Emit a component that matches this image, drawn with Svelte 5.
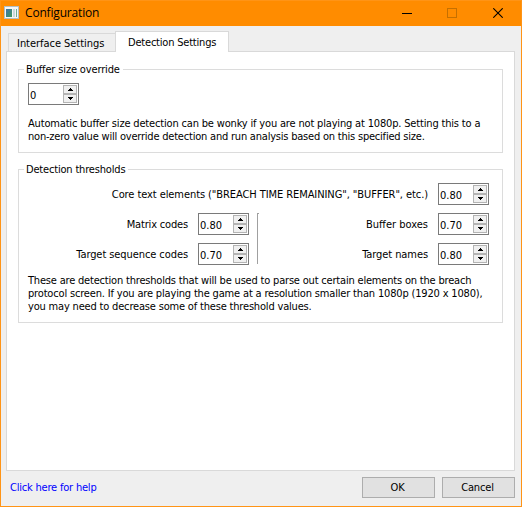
<script>
  let buffer = $state('0');
  let core = $state('0.80');
  let matrix = $state('0.80');
  let boxes = $state('0.70');
  let sequence = $state('0.70');
  let names = $state('0.80');
</script>

{#snippet spin(value)}
  <div class="spin">
    <span class="value">{value}</span>
    <div class="steps">
      <div class="step"><svg width="5" height="3" shape-rendering="crispEdges"><path d="M2 0h1v1h1v1h1v1H0V2h1V1h1z" /></svg></div>
      <div class="step"><svg width="5" height="3" shape-rendering="crispEdges"><path d="M0 0h5v1H4v1H3v1H2V2H1V1H0z" /></svg></div>
    </div>
  </div>
{/snippet}

<div class="window">
  <header>
    <svg class="app" width="15" height="13" viewBox="0 0 15 13">
      <defs>
        <linearGradient id="pane" x1="0" y1="0" x2="1" y2="1">
          <stop offset="0" stop-color="#3f74ad" />
          <stop offset="1" stop-color="#3f9a5c" />
        </linearGradient>
      </defs>
      <rect x=".5" y=".5" width="14" height="12" fill="#f6f6f6" stroke="#b3bfc4" />
      <rect x="2" y="3" width="6" height="8" fill="url(#pane)" />
      <rect x="9" y="3" width="2" height="8" fill="#c9d8dc" />
      <rect x="12" y="3" width="1" height="8" fill="#6fae94" />
    </svg>
    <span class="title">Configuration</span>
    <div class="controls">
      <svg width="10" height="10" shape-rendering="crispEdges"><path d="M0 5.5h10" stroke="#000" /></svg>
      <svg width="10" height="10" shape-rendering="crispEdges"><rect x=".5" y=".5" width="9" height="9" fill="none" stroke="#c67000" /></svg>
      <svg width="10" height="10"><path d="M.3 .3l9.4 9.4M9.7 .3L.3 9.7" stroke="#000" stroke-width="1.1" /></svg>
    </div>
  </header>

  <nav>
    <div class="tab"><span class="t-int">Interface Settings</span></div>
    <div class="tab active"><span class="t-det">Detection Settings</span></div>
  </nav>

  <main>
    <section class="group first">
      <h2><span class="g1">Buffer size override</span></h2>
      {@render spin(buffer)}
      <p>
        <span class="a1">Automatic buffer size detection can be wonky if you are not playing at 1080p. Setting this to a</span>
        <span class="a2">non-zero value will override detection and run analysis based on this specified size.</span>
      </p>
    </section>

    <section class="group second">
      <h2><span class="g2">Detection thresholds</span></h2>
      <div class="row">
        <span class="label l1">Core text elements ("BREACH TIME REMAINING", "BUFFER", etc.)</span>
        {@render spin(core)}
      </div>
      <div class="columns">
        <div class="col left">
          <div class="row"><span class="label l2">Matrix codes</span>{@render spin(matrix)}</div>
          <div class="row"><span class="label l3">Target sequence codes</span>{@render spin(sequence)}</div>
        </div>
        <div class="rule"></div>
        <div class="col right">
          <div class="row"><span class="label l4">Buffer boxes</span>{@render spin(boxes)}</div>
          <div class="row"><span class="label l5">Target names</span>{@render spin(names)}</div>
        </div>
      </div>
      <p>
        <span class="b1">These are detection thresholds that will be used to parse out certain elements on the breach</span>
        <span class="b2">protocol screen. If you are playing the game at a resolution smaller than 1080p (1920 x 1080),</span>
        <span class="b3">you may need to decrease some of these threshold values.</span>
      </p>
    </section>
  </main>

  <footer>
    <a href="#help">Click here for help</a>
    <button>OK</button>
    <button>Cancel</button>
  </footer>
</div>

<style>
  .window {
    box-sizing: border-box;
    width: 522px;
    height: 507px;
    display: flex;
    flex-direction: column;
    border: 1px solid #ff9416;
    border-top: 0;
    background: #efefef;
    color: #000;
    font: 11px/13px "DejaVu Sans Condensed", "DejaVu Sans", sans-serif;
    font-stretch: condensed;
    white-space: nowrap;
  }
  header {
    box-sizing: border-box;
    height: 26px;
    flex: none;
    display: flex;
    align-items: center;
    padding: 0 14px 0 3px;
    margin: 0 -1px;
    border: 1px solid #ff9416;
    border-bottom: 0;
    background: #ff8c00;
  }
  .app { display: block; margin-bottom: 2px; }
  .title {
    margin: -1px 0 0 6px;
    font: 12px/16px "Open Sans", "Noto Sans", sans-serif;
    letter-spacing: -0.18px;
  }
  .controls {
    margin: 0 0 1px auto;
    display: flex;
    padding-right: 4px;
  }
  .controls svg { display: block; }
  .controls svg:nth-child(1) { margin-right: 35px; }
  .controls svg:nth-child(2) { margin-right: 36px; }
  nav {
    height: 25px;
    flex: none;
    display: flex;
    align-items: flex-end;
    padding-left: 7px;
  }
  .tab {
    box-sizing: border-box;
    width: 107px;
    height: 18px;
    border: 1px solid #d9d9d9;
    border-width: 1px 0 0 1px;
    padding: 3px 0 0 8px;
  }
  .tab.active {
    width: 114px;
    height: 21px;
    margin-bottom: -1px;
    padding: 4px 0 0 12px;
    border-width: 1px 1px 0 1px;
    background: #fff;
    z-index: 1;
  }
  main {
    box-sizing: border-box;
    width: 509px;
    height: 420px;
    flex: none;
    margin-left: 5px;
    padding: 17px 11px 0;
    border: 1px solid #d9d9d9;
    background: #fff;
  }
  .group {
    box-sizing: border-box;
    width: 485px;
    border: 1px solid #dcdcdc;
    padding-left: 9px;
  }
  .first { height: 84px; }
  .second { height: 154px; margin-top: 16px; }
  h2 {
    width: max-content;
    height: 13px;
    margin: -7px 0 0 -4px;
    padding: 0 3px 0 2px;
    background: #fff;
    font: inherit;
  }
  .first .spin { margin-top: 7px; }
  p { margin: 12px 0 0; }
  p span { display: block; }
  .second p { margin-top: 9px; }
  .row {
    display: flex;
    justify-content: flex-end;
    align-items: center;
    gap: 10px;
  }
  .second > .row { margin: 7px 13px 8px 0; }
  .columns { display: flex; margin-right: 13px; }
  .col { display: flex; flex-direction: column; gap: 8px; }
  .left { width: 221px; }
  .right { flex: 1; }
  .rule {
    box-sizing: border-box;
    width: 2px;
    height: 51px;
    margin-left: 8px;
    border-left: 1px solid #a0a0a0;
    border-top: 1px solid #a0a0a0;
  }
  .spin {
    box-sizing: border-box;
    width: 51px;
    height: 22px;
    display: flex;
    justify-content: space-between;
    border: 1px solid #7a7a7a;
    padding: 1px;
    background: #fff;
  }
  .value { padding: 4px 0 0 0; }
  .steps {
    width: 14px;
    display: flex;
    flex-direction: column;
  }
  .step {
    box-sizing: border-box;
    flex: 1;
    display: flex;
    align-items: center;
    justify-content: center;
    border: 1px solid #b4b4b4;
    background: #f0f0f0;
  }
  .step svg { display: block; }
  .t-int { letter-spacing: -0.04px; }
  .t-det { letter-spacing: -0.2px; }
  .g1 { letter-spacing: -0.15px; }
  .g2 { letter-spacing: -0.18px; }
  .a1 { letter-spacing: -0.17px; }
  .a2 { letter-spacing: -0.21px; }
  .l1 { letter-spacing: -0.08px; }
  .l2 { letter-spacing: -0.17px; }
  .l3, .l5 { letter-spacing: -0.08px; }
  .b1 { letter-spacing: -0.19px; }
  .b2 { letter-spacing: -0.17px; }
  .b3 { letter-spacing: -0.18px; }
  footer {
    display: flex;
    align-items: center;
    gap: 7px;
    padding: 6px 6px 0 9px;
  }
  a {
    margin-right: auto;
    color: #00f;
    text-decoration: none;
    letter-spacing: -0.2px;
  }
  button {
    box-sizing: border-box;
    width: 73px;
    height: 21px;
    padding: 0 2px 0 0;
    border: 1px solid #adadad;
    border-radius: 0;
    background: #e1e1e1;
    color: #000;
    font: inherit;
    letter-spacing: -0.15px;
  }
</style>
